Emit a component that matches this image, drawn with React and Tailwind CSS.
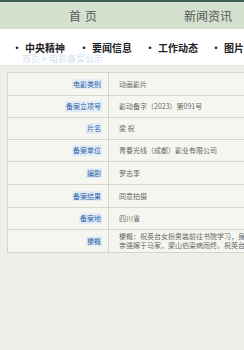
import React from 'react'

const rows = [
    { label: '电影类别', value: '动画影片', h: 'h-[23px]' },
    { label: '备案立项号', value: '影动备字（2023）第091号', h: 'h-[22px]' },
    { label: '片名', value: '梁 祝', h: 'h-[22px]' },
    { label: '备案单位', value: '青春光线（成都）影业有限公司', h: 'h-[22px]' },
    { label: '编剧', value: '罗志李', h: 'h-[23px]' },
    { label: '备案结果', value: '同意拍摄', h: 'h-[23px]' },
    { label: '备案地', value: '四川省', h: 'h-[22px]' },
]

export default function App() {
    return (
        <div className="w-[244px] h-[350px] overflow-hidden bg-[#efefea] font-['Noto_Sans_CJK_SC',sans-serif]">
            <div className="h-[2px] bg-[#3f5e4f]" />
            <div className="h-[27px] bg-[#d5e1cf] flex items-center text-[12px] text-[#555]">
                <div className="w-[170px] flex justify-center">
                    <span className="tracking-[4px]">首页</span>
                </div>
                <div className="pl-[14px] whitespace-nowrap">新闻资讯</div>
            </div>

            <div className="h-[37px] bg-white border-b border-[#e4e4de] relative">
                <div className="absolute left-[22px] top-[23px] text-[9px] text-[#d2def0] whitespace-nowrap">
                    首页 &gt; 电影备案公示
                </div>
                <div className="relative flex items-center pt-[11px] text-[10px] font-bold text-[#222] whitespace-nowrap">
                    {['中央精神', '要闻信息', '工作动态', '图片'].map((item, index) => (
                        <div key={index} className={index === 0 ? 'w-[79px] pl-[12px]' : index === 3 ? '' : 'w-[66px]'}>
                            <span className="mr-[3px]">•</span>{item}
                        </div>
                    ))}
                </div>
            </div>

            <div className="pt-[6px] pl-[7px]">
                <div className="w-[300px] border-t border-l border-[#d6d6cf] bg-[#f6f6f1] text-[7px]">
                    {rows.map((row, index) => (
                        <div key={index} className={`flex border-b border-[#d6d6cf] ${row.h}`}>
                            <div className="w-[101px] shrink-0 border-r border-[#d6d6cf] flex items-center justify-end pr-[6px]">
                                <span className="text-[#2f63a6] bg-[#e2edf7] px-[1px]">{row.label}</span>
                            </div>
                            <div className="flex items-center pl-[10px] text-[#666] whitespace-nowrap">{row.value}</div>
                        </div>
                    ))}
                    <div className="flex border-b border-[#d6d6cf] h-[23px]">
                        <div className="w-[101px] shrink-0 border-r border-[#d6d6cf] flex items-center justify-end pr-[6px]">
                            <span className="text-[#2f63a6] bg-[#e2edf7] px-[1px]">梗概</span>
                        </div>
                        <div className="flex flex-col justify-center pl-[10px] text-[#666] whitespace-nowrap leading-[9px]">
                            <div>梗概：祝英台女扮男装前往书院学习，身为女儿身</div>
                            <div>亲强嫁于马家，梁山伯染病而终。祝英台出嫁途中</div>
                        </div>
                    </div>
                </div>
            </div>
        </div>
    )
}
